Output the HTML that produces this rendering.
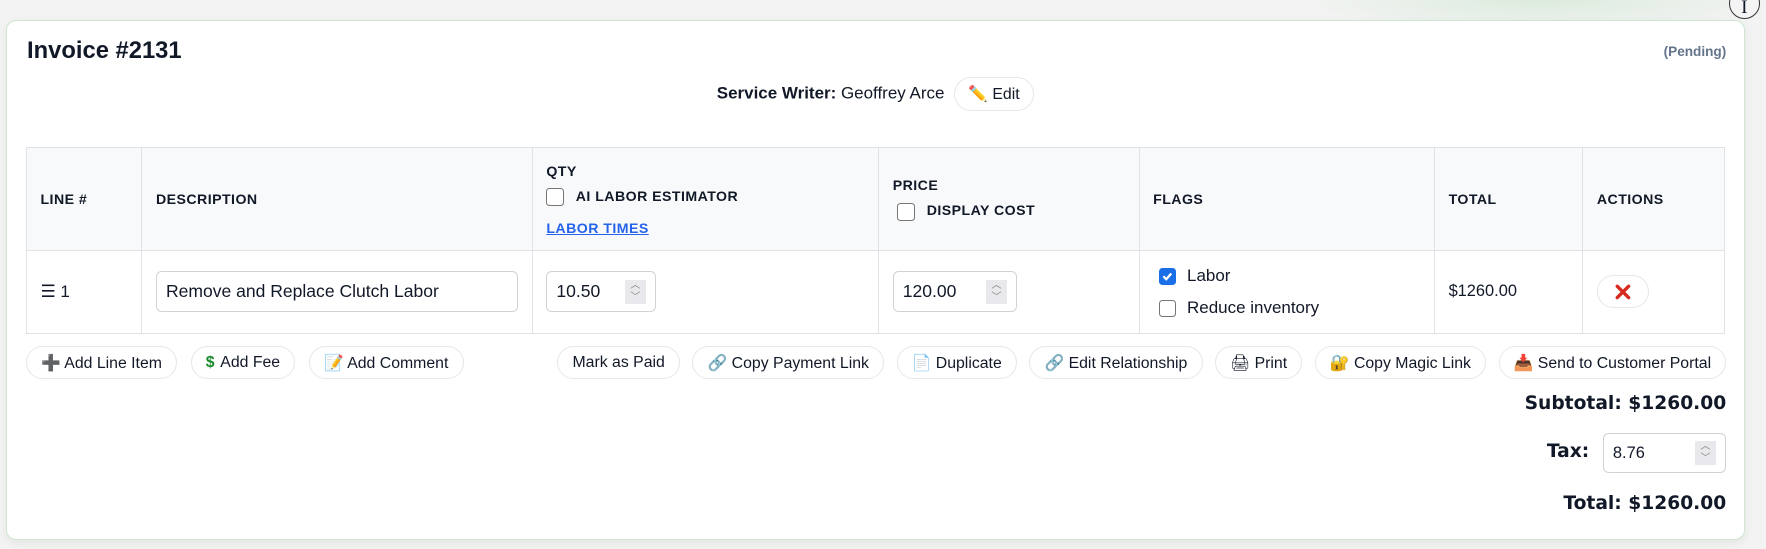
<!DOCTYPE html>
<html><head><meta charset="utf-8"><style>
html,body{margin:0;padding:0}
body{width:1560px;height:485px;zoom:1.13205;background:#f2f3f2;font-family:"Liberation Sans","DejaVu Sans",sans-serif;color:#111827;position:relative;overflow:hidden}
.glow{position:absolute;left:1150px;top:-30px;width:420px;height:60px;background:radial-gradient(ellipse at center,#dcebdd 0%,rgba(242,243,242,0) 70%)}
.card{position:absolute;left:5px;top:18px;width:1535px;height:457px;background:#fff;border:1px solid #cfe6d2;border-radius:9px;box-shadow:0 3px 8px rgba(0,0,0,.06)}
.abs{position:absolute}
.title{left:18px;top:14px;font-size:21px;font-weight:bold;color:#111827}
.pend{right:16px;top:20px;font-size:12px;font-weight:bold;color:#64748b}
.sw{left:0;width:1535px;top:49px;text-align:center;font-size:15px}
.pill{display:inline-flex;align-items:center;gap:5px;border:1px solid #e5e7eb;border-radius:16px;background:#fff;font-size:14px;color:#111827;padding:0 12.5px;height:29px;box-sizing:border-box;vertical-align:middle}
table{position:absolute;left:17px;top:111px;width:1509px;border-collapse:collapse}
th,td{border:1px solid #e0e2e5;text-align:left;vertical-align:middle}
th{background:#f8f9fa;height:91px;font-size:12.5px;font-weight:bold;letter-spacing:.4px;padding:0 12px;box-sizing:border-box}
td{height:73px;font-size:15px;padding:0 12px;box-sizing:border-box}
.inp{border:1px solid #cfd2d6;border-radius:5px;height:36px;box-sizing:border-box;display:flex;align-items:center;padding:0 8px;font-size:15.5px;position:relative}
.spin{position:absolute;right:8px;top:7px;width:19px;height:21px;background:#e9e9ed;color:#888;font-size:9px;line-height:10px;text-align:center}
.cb{display:inline-block;width:15px;height:15px;border:1px solid #767676;border-radius:3px;vertical-align:middle;box-sizing:border-box;background:#fff}
.cbon{background:#1a6ee8;border-color:#1a6ee8;position:relative}
.tot{position:absolute;right:16px;font-family:"DejaVu Sans",sans-serif;font-weight:bold;font-size:16.5px;color:#111827}
</style></head><body>
<div class="glow"></div>
<div class="card">
 <div class="abs title">Invoice #2131</div>
 <div class="abs pend">(Pending)</div>
 <div class="abs sw"><b>Service Writer:</b> Geoffrey Arce <span class="pill" style="margin-left:4px;padding:0 12px;height:30px">✏️ Edit</span></div>
 <table style="width:1501px">
  <tr>
   <th style="width:102px">LINE #</th>
   <th style="width:344px">DESCRIPTION</th>
   <th style="width:306px">QTY<div style="margin-top:8px"><span class="cb" style="width:16px;height:16px;margin-right:10px"></span>AI LABOR ESTIMATOR</div><div style="margin-top:12px;color:#2563eb;text-decoration:underline">LABOR TIMES</div></th>
   <th style="width:230px">PRICE<div style="margin-top:8px"><span class="cb" style="width:16px;height:16px;margin-right:10px;margin-left:4px"></span>DISPLAY COST</div></th>
   <th style="width:261px">FLAGS</th>
   <th style="width:131px">TOTAL</th>
   <th>ACTIONS</th>
  </tr>
  <tr>
   <td>☰ 1</td>
   <td><div class="inp" style="width:320px">Remove and Replace Clutch Labor</div></td>
   <td><div class="inp" style="width:97px">10.50<div class="spin">︿<br>﹀</div></div></td>
   <td><div class="inp" style="width:110px">120.00<div class="spin">︿<br>﹀</div></div></td>
   <td style="padding-left:17px"><div><span class="cb cbon"><svg width="13" height="13" viewBox="0 0 13 13" style="position:absolute;left:0;top:0"><path d="M3 6.5l2.5 2.5 4.5-5" stroke="#fff" stroke-width="2" fill="none"/></svg></span><span style="margin-left:10px">Labor</span></div><div style="margin-top:11px"><span class="cb"></span><span style="margin-left:10px">Reduce inventory</span></div></td>
   <td style="font-size:14.5px">$1260.00</td>
   <td><span class="pill" style="width:46px;justify-content:center;padding:0"><svg width="14" height="14" viewBox="0 0 14 14"><path d="M2 2l10 10M12 2L2 12" stroke="#d62a1e" stroke-width="3" stroke-linecap="round"/></svg></span></td>
  </tr>
 </table>
 <div class="abs" style="left:17px;top:287px;display:flex;gap:12px"><span class="pill">➕ Add Line Item</span><span class="pill"><b style="color:#1a8a2e">$</b> Add Fee</span><span class="pill">📝 Add Comment</span></div>
 <div class="abs" style="right:16px;top:287px;display:flex;gap:11px"><span class="pill">Mark as Paid</span><span class="pill">🔗 Copy Payment Link</span><span class="pill">📄 Duplicate</span><span class="pill">🔗 Edit Relationship</span><span class="pill">🖨 Print</span><span class="pill">🔐 Copy Magic Link</span><span class="pill">📥 Send to Customer Portal</span></div>
 <div class="tot" style="top:328px">Subtotal: $1260.00</div>
 <div class="tot" style="top:371px;right:137px">Tax:</div>
 <div class="inp" style="position:absolute;right:16px;top:364px;width:109px;height:35px;font-size:14.5px">8.76<div class="spin" style="top:6px">︿<br>﹀</div></div>
 <div class="tot" style="top:417px">Total: $1260.00</div>
</div>
<div class="abs" style="left:1527px;top:-11px;width:26px;height:26px;border:1px solid #333;border-radius:50%;background:#f4f4f4;text-align:center;font-family:'Liberation Serif',serif;font-size:17px;line-height:34px">I</div>
</body></html>
